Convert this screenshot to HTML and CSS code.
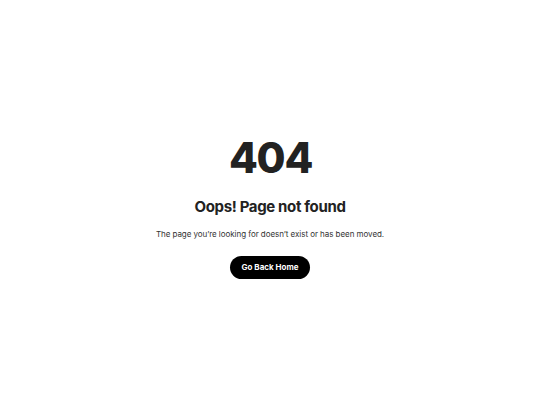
FILE: index.html
```html
<!DOCTYPE html>
<html>
<head>
<meta charset="utf-8">
<link rel="stylesheet" href="styles.css">
</head>
<body>
<main class="page">
  <h1 class="code">404</h1>
  <h2 class="title">Oops! Page not found</h2>
  <p class="desc">The page you’re looking for doesn’t exist or has been moved.</p>
  <a class="btn" href="#">Go Back Home</a>
</main>
</body>
</html>
```
FILE: styles.css
```css
html, body {
  margin: 0;
  padding: 0;
  background: #ffffff;
}
body {
  font-family: Inter, "Noto Sans", sans-serif;
  color: #222222;
}
.page {
  box-sizing: border-box;
  height: 405px;
  padding-top: 11px;
  display: flex;
  flex-direction: column;
  align-items: center;
  justify-content: center;
  text-align: center;
}
.code {
  margin: 0 0 0 1px;
  font-size: 42px;
  font-weight: 800;
  line-height: 1;
  letter-spacing: -1.3px;
  color: #222222;
}
.title {
  margin: 19px 0 0;
  font-size: 15px;
  font-weight: 700;
  line-height: 1.2;
  letter-spacing: -0.35px;
  color: #222222;
}
.desc {
  margin: 13px 0 0;
  font-size: 8px;
  line-height: 1.3;
  letter-spacing: -0.05px;
  color: #333333;
}
.btn {
  margin-top: 16px;
  display: inline-block;
  background: #000000;
  color: #ffffff;
  text-decoration: none;
  font-size: 8px;
  font-weight: 700;
  padding: 0 12px;
  height: 23px;
  line-height: 23px;
  border-radius: 12px;
}
```
